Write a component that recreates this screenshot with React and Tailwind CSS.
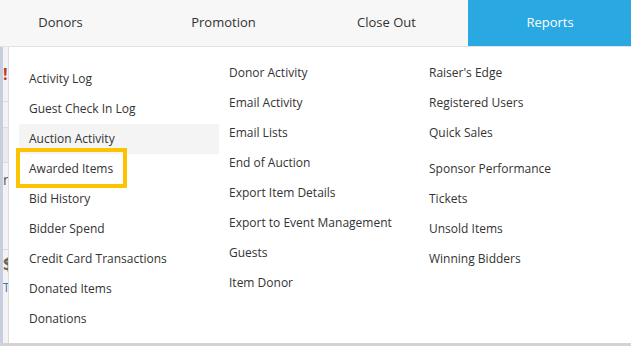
import React from "react";

const col1 = [
  "Activity Log",
  "Guest Check In Log",
  "Auction Activity",
  "Awarded Items",
  "Bid History",
  "Bidder Spend",
  "Credit Card Transactions",
  "Donated Items",
  "Donations",
];
const col2 = [
  "Donor Activity",
  "Email Activity",
  "Email Lists",
  "End of Auction",
  "Export Item Details",
  "Export to Event Management",
  "Guests",
  "Item Donor",
];
const col3a = ["Raiser's Edge", "Registered Users", "Quick Sales"];
const col3b = ["Sponsor Performance", "Tickets", "Unsold Items", "Winning Bidders"];

function Item({ label, highlight, boxed }) {
  return (
    <div
      className={
        "relative h-[30px] flex items-center pl-[10px] text-[12px] text-[#333333] whitespace-nowrap " +
        (highlight ? "bg-[#f4f4f4]" : "")
      }
    >
      {label}
      {boxed && (
        <div className="absolute left-[-3px] top-[-6px] w-[111px] h-[40px] border-[4px] border-[#fdc300]" />
      )}
    </div>
  );
}

export default function App() {
  const tabs = ["Donors", "Promotion", "Close Out", "Reports"];
  return (
    <div
      className="w-[631px] h-[346px] overflow-hidden flex flex-col bg-[#d6d6d6]"
      style={{ fontFamily: '"Open Sans", "Liberation Sans", sans-serif' }}
    >
      <div className="h-[47px] shrink-0 bg-[#f7f7f7] border-b border-[#e2e2e2] overflow-hidden">
        <div className="flex -ml-[21px] h-[46px]">
          {tabs.map((t) => (
            <div
              key={t}
              className={
                "w-[163px] shrink-0 h-[46px] flex items-center justify-center text-[13px] " +
                (t === "Reports" ? "bg-[#29a8e1] text-white w-[164px]" : "text-[#333333]")
              }
            >
              {t}
            </div>
          ))}
        </div>
      </div>
      <div className="flex h-[296px] shrink-0">
        <div className="w-[8px] shrink-0 flex bg-[#f3f3f3]">
          <div className="w-[3px] bg-[#c6cfe1]" />
          <div className="flex-1 flex flex-col overflow-hidden">
            <div className="h-[55px] border-b border-[#dddddd] flex items-center overflow-hidden">
              <span className="text-[16px] font-bold text-[#c0392b] leading-none">!</span>
            </div>
            <div className="h-[26px] border-b border-[#dddddd]" />
            <div className="h-[35px] border-b border-[#dddddd] bg-[#ebebeb]" />
            <div className="h-[32px] flex items-center text-[14px] text-[#555] overflow-hidden">n</div>
            <div className="h-[55px] border-b border-[#dddddd]" />
            <div className="h-[28px] flex items-center text-[18px] font-bold text-[#666] overflow-hidden leading-none">$</div>
            <div className="h-[20px] flex items-center text-[12px] text-[#4a6fa5] overflow-hidden">Ti</div>
          </div>
        </div>
        <div className="flex-1 bg-white border-l border-[#dcdcdc] pt-[11px] pl-[10px] flex">
          <div className="w-[200px] mt-[6px] flex flex-col">
            {col1.map((l) => (
              <Item
                key={l}
                label={l}
                highlight={l === "Auction Activity"}
                boxed={l === "Awarded Items"}
              />
            ))}
          </div>
          <div className="w-[200px] flex flex-col">
            {col2.map((l) => (
              <Item key={l} label={l} />
            ))}
          </div>
          <div className="w-[200px] flex flex-col">
            {col3a.map((l) => (
              <Item key={l} label={l} />
            ))}
            <div className="h-[6px]" />
            {col3b.map((l) => (
              <Item key={l} label={l} />
            ))}
          </div>
        </div>
      </div>
      <div className="flex-1 bg-[#d3d3d3]" />
    </div>
  );
}
